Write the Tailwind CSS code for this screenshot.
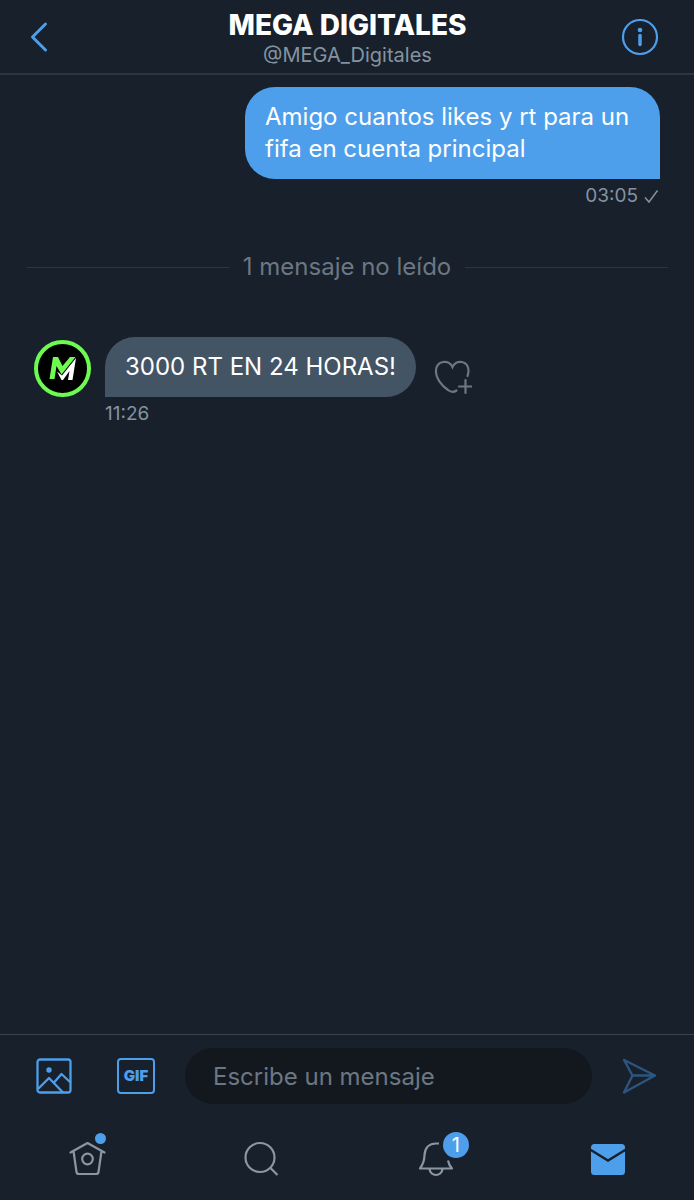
<!DOCTYPE html>
<html lang="es">
<head>
    <meta charset="UTF-8">
    <meta name="viewport" content="width=device-width, initial-scale=1.0">
    <title>MEGA DIGITALES - Mensajes</title>
    <script src="https://cdn.jsdelivr.net/npm/@tailwindcss/browser@4"></script>
</head>
<body class="min-h-screen flex flex-col bg-[#18202b] font-['Inter','Liberation_Sans',sans-serif] text-white">
    <header class="h-[75px] shrink-0 flex items-center justify-between pl-7 pr-[35px] border-b-2 border-[#2d3540]">
        <button class="w-12 text-[#4d9eeb]" aria-label="Volver">
            <svg class="w-6 h-9" viewBox="0 0 24 36" fill="none" stroke="currentColor" stroke-width="3" stroke-linecap="round" stroke-linejoin="round"><path d="M17.500 5 4.500 18l13 13"/></svg>
        </button>
        <div class="flex-1 pt-1 text-center">
            <h1 class="text-[28px] leading-8 font-extrabold">MEGA DIGITALES</h1>
            <p class="text-[20px] leading-7 text-[#8493a2]">@MEGA_Digitales</p>
        </div>
        <button class="w-10 flex justify-end text-[#4d9eeb]" aria-label="Información">
            <svg class="w-[38px] h-[38px]" viewBox="0 0 38 38" fill="none" stroke="currentColor" stroke-width="2.200"><circle cx="19" cy="19" r="17"/><path d="M19 17.500v9" stroke-width="3.500" stroke-linecap="round"/><circle cx="19" cy="12" r="2.300" fill="currentColor" stroke="none"/></svg>
        </button>
    </header>

    <main class="flex-1 px-[34px] pt-3">
        <!-- Mensaje enviado -->
        <div class="flex flex-col items-end">
            <p class="max-w-[415px] px-5 py-[14px] rounded-[30px] rounded-br-none bg-[#4d9eeb] text-[24px] leading-8">Amigo cuantos likes y rt para un fifa en cuenta principal</p>
            <div class="mt-[5px] flex items-center gap-1 text-[19px] leading-6 text-[#8493a2]">
                <time>03:05</time>
                <svg class="w-[18px] h-[18px]" viewBox="0 0 18 18" fill="none" stroke="currentColor" stroke-width="1.500"><path d="M3 10.500l4 4.500 8.500-11.500"/></svg>
            </div>
        </div>

        <div class="mt-[43px] -mx-2 flex items-center gap-[14px] text-[24px] leading-8 text-[#6c7784]">
            <span class="flex-1 h-px bg-[#2d3540]"></span>
            <h2>1 mensaje no leído</h2>
            <span class="flex-1 h-px bg-[#2d3540]"></span>
        </div>

        <!-- Mensaje recibido -->
        <div class="mt-[54px] flex items-start">
            <svg class="mt-[3px] mr-[14px] w-[57px] h-[57px]" viewBox="0 0 57 57" role="img" aria-label="MEGA Digitales">
                <circle cx="28.500" cy="28.500" r="26.500" fill="#000" stroke="#6dfb50" stroke-width="4"/>
                <path d="M15.500 39 19 17h5l4.500 9 7.500-9h5.500L27.500 34.500 22.500 26 20.500 39z" fill="#6dfb50"/>
                <path d="M23 31.500l4.500 8.500h1.500l6.500-9-1.500 9h4.500L42 18 28 35.500z" fill="#fff"/>
            </svg>
            <div>
                <div class="flex items-center">
                    <p class="px-5 py-[14px] rounded-[30px] rounded-bl-none bg-[#435465] text-[24px] leading-8">3000 RT EN 24 HORAS!</p>
                    <button class="ml-4 mt-4 text-[#6c7784]" aria-label="Reaccionar">
                        <svg class="w-10 h-10" viewBox="0 0 40 40" fill="none" stroke="currentColor" stroke-width="2.200" stroke-linecap="round"><path d="M24.500 35.500q-4 3-8.500-.5C10 31 3.500 23 4 15.500 4.500 5.500 17 4 20.500 12c3.500-8 15.500-6.500 16 3.500q0 3-1 5.500"/><path d="M33.500 25v13M27 31.500h13"/></svg>
                    </button>
                </div>
                <time class="block mt-[5px] text-[19px] leading-6 text-[#8493a2]">11:26</time>
            </div>
        </div>
    </main>

    <footer class="shrink-0 border-t border-[#3a434e]">
        <form class="flex items-center pl-9 pr-9 pt-[13px]">
            <button type="button" class="text-[#4d9eeb]" aria-label="Foto">
                <svg class="w-9 h-9" viewBox="0 0 36 36" fill="none" stroke="currentColor" stroke-width="2.300" stroke-linejoin="round"><rect x="1.500" y="1.500" width="33" height="33" rx="2.500"/><path d="M2 31 13 20l14 14.500M18 24.500l7.500-8.500 9 8.500"/><circle cx="13" cy="12" r="2.700" fill="currentColor" stroke="none"/></svg>
            </button>
            <button type="button" class="ml-[45px] w-[38px] h-9 rounded-[4px] border-2 border-[#4d9eeb] text-[15px] leading-4 font-black text-[#4d9eeb]">GIF</button>
            <input type="text" aria-label="Mensaje" placeholder="Escribe un mensaje" class="ml-[30px] flex-1 min-w-0 h-14 px-7 rounded-full bg-[#13181f] text-[24px] placeholder:text-[#6c7784] outline-none">
            <button class="ml-[30px] text-[#2c567f]" aria-label="Enviar">
                <svg class="w-9 h-9" viewBox="0 0 36 36" fill="none" stroke="currentColor" stroke-width="2.300" stroke-linejoin="round"><path d="M2 2 33 17.500 2 34.500l8.500-17zM10.500 17.500h22"/></svg>
            </button>
        </form>
        <nav class="grid grid-cols-4 h-24 pt-[35px] text-[#8b96a3]">
            <a href="#" class="flex justify-center" aria-label="Inicio">
                <span class="relative w-10 h-10">
                    <svg class="w-10 h-10" viewBox="0 0 40 40" fill="none" stroke="currentColor" stroke-width="2.200" stroke-linecap="round" stroke-linejoin="round"><path d="M3.500 13.500 20.500 4l17 9.500M6.500 12l3 21q.3 2 2.500 2h17q2.200 0 2.500-2l3-21"/><circle cx="20.500" cy="20" r="5.300"/></svg>
                    <span class="absolute -top-[6px] left-7 w-[11px] h-[11px] rounded-full bg-[#4d9eeb]"></span>
                </span>
            </a>
            <a href="#" class="flex justify-center" aria-label="Buscar">
                <svg class="w-10 h-10" viewBox="0 0 40 40" fill="none" stroke="currentColor" stroke-width="2.200"><circle cx="20" cy="18.500" r="14.500"/><path d="M30 28.500l7.500 7.500"/></svg>
            </a>
            <a href="#" class="flex justify-center" aria-label="Notificaciones">
                <span class="relative w-10 h-10">
                    <svg class="w-10 h-10" viewBox="0 0 40 40" fill="none" stroke="currentColor" stroke-width="2.200" stroke-linejoin="round"><path d="M25 4.500h-3C15 4.500 11 9 10.500 16c0 6-2 10-4.500 13.500h32q-3-3-4-8M15.500 30c1 8 12 8 13 0"/></svg>
                    <span class="absolute -top-[7px] left-[29px] w-[26px] h-[26px] rounded-full bg-[#4d9eeb] text-white text-[20px] leading-[26px] text-center">1</span>
                </span>
            </a>
            <a href="#" class="flex justify-center text-[#4d9eeb]" aria-label="Mensajes">
                <svg class="w-10 h-10" viewBox="0 0 40 40"><rect x="4" y="5" width="34" height="31" rx="3.500" fill="currentColor"/><path d="M3 10.500 21 21.500 39 10.500" fill="none" stroke="#18202b" stroke-width="2.400"/></svg>
            </a>
        </nav>
    </footer>
</body>
</html>
